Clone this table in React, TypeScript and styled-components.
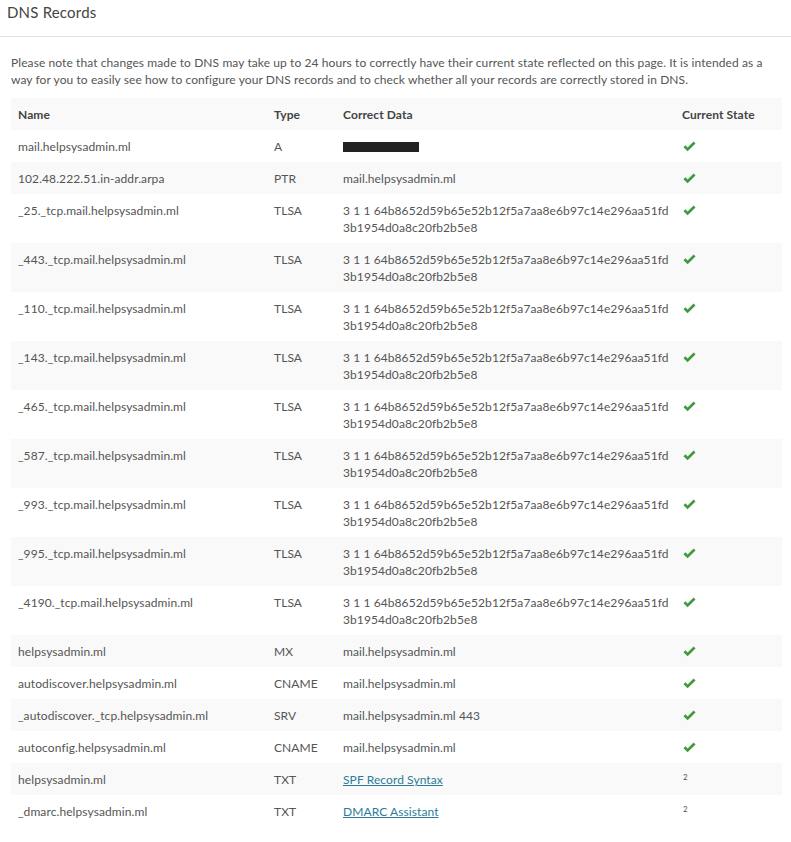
import React from "react";
import styled, { createGlobalStyle } from "styled-components";

const Global = createGlobalStyle`
  html, body { margin: 0; padding: 0; background: #fff; }
  *, *::before, *::after { box-sizing: border-box; }
  body {
    font-family: Lato, "Open Sans", "Liberation Sans", sans-serif;
    font-size: 12px;
    letter-spacing: 0.09px;
    color: #555;
  }
`;

const Page = styled.div`
  width: 791px;
`;

const TitleBar = styled.div`
  height: 37px;
  border-bottom: 1px solid #e3e3e3;
  padding: 0 7px;
`;

const Title = styled.h2`
  margin: 0;
  font-size: 15px;
  line-height: 24px;
  font-weight: 400;
  letter-spacing: 0.2px;
  color: #444;
`;

const Content = styled.div`
  padding: 17px 8px 0 11px;
`;

const Note = styled.p`
  margin: 0 0 10px;
  line-height: 17px;
  color: #555;
`;

const Table = styled.table`
  width: 771px;
  border-collapse: collapse;
  table-layout: fixed;
`;

const Row = styled.tr<{ $shade: boolean }>`
  background: ${(p) => (p.$shade ? "#f9f9f9" : "#fff")};
`;

const HeadCell = styled.th<{ $w: number }>`
  width: ${(p) => p.$w}px;
  text-align: left;
  font-weight: 700;
  color: #444;
  padding: 8px 7px 7px;
  line-height: 17px;
`;

const Cell = styled.td<{ $data?: boolean }>`
  height: 32px;
  padding: ${(p) => (p.$data ? "8px 0 7px 7px" : "8px 7px 7px")};
  line-height: 17px;
  vertical-align: top;
  word-break: ${(p) => (p.$data ? "break-all" : "normal")};
`;

const Redacted = styled.span`
  display: inline-block;
  width: 76px;
  height: 10px;
  background: #222;
  vertical-align: middle;
  margin-top: -2px;
`;

const Link = styled.a`
  color: #2a7d99;
  text-decoration: underline;
`;

const Sup = styled.span`
  display: inline-block;
  font-size: 8px;
  line-height: 8px;
  color: #555;
  margin-left: 1px;
  vertical-align: top;
  position: relative;
  top: 2px;
`;

const Check = () => (
  <svg width="13" height="11" viewBox="0 0 13 11" style={{ display: "block", marginTop: 3, marginLeft: 1 }}>
    <path d="M0.5 6.2 L2.4 4.3 L4.6 6.5 L10.6 0.5 L12.5 2.4 L4.6 10.3 Z" fill="#3d9a3d" />
  </svg>
);

const hash = "3 1 1 64b8652d59b65e52b12f5a7aa8e6b97c14e296aa51fd3b1954d0a8c20fb2b5e8";

type Rec = { name: string; type: string; data: React.ReactNode; state: "ok" | "sup" };

const records: Rec[] = [
  { name: "mail.helpsysadmin.ml", type: "A", data: <Redacted />, state: "ok" },
  { name: "102.48.222.51.in-addr.arpa", type: "PTR", data: "mail.helpsysadmin.ml", state: "ok" },
  ...["25", "443", "110", "143", "465", "587", "993", "995", "4190"].map((p) => ({
    name: `_${p}._tcp.mail.helpsysadmin.ml`,
    type: "TLSA",
    data: hash,
    state: "ok" as const,
  })),
  { name: "helpsysadmin.ml", type: "MX", data: "mail.helpsysadmin.ml", state: "ok" },
  { name: "autodiscover.helpsysadmin.ml", type: "CNAME", data: "mail.helpsysadmin.ml", state: "ok" },
  { name: "_autodiscover._tcp.helpsysadmin.ml", type: "SRV", data: "mail.helpsysadmin.ml 443", state: "ok" },
  { name: "autoconfig.helpsysadmin.ml", type: "CNAME", data: "mail.helpsysadmin.ml", state: "ok" },
  { name: "helpsysadmin.ml", type: "TXT", data: <Link href="#">SPF Record Syntax</Link>, state: "sup" },
  { name: "_dmarc.helpsysadmin.ml", type: "TXT", data: <Link href="#">DMARC Assistant</Link>, state: "sup" },
];

export default function App() {
  return (
    <Page>
      <Global />
      <TitleBar>
        <Title>DNS Records</Title>
      </TitleBar>
      <Content>
        <Note>
          Please note that changes made to DNS may take up to 24 hours to correctly have their current state
          reflected on this page. It is intended as a way for you to easily see how to configure your DNS records
          and to check whether all your records are correctly stored in DNS.
        </Note>
        <Table>
          <thead>
            <Row $shade>
              <HeadCell $w={256}>Name</HeadCell>
              <HeadCell $w={69}>Type</HeadCell>
              <HeadCell $w={339}>Correct Data</HeadCell>
              <HeadCell $w={107}>Current State</HeadCell>
            </Row>
          </thead>
          <tbody>
            {records.map((r, i) => (
              <Row key={i} $shade={i % 2 === 1}>
                <Cell>{r.name}</Cell>
                <Cell>{r.type}</Cell>
                <Cell $data>{r.data}</Cell>
                <Cell>{r.state === "ok" ? <Check /> : <Sup>2</Sup>}</Cell>
              </Row>
            ))}
          </tbody>
        </Table>
      </Content>
    </Page>
  );
}
